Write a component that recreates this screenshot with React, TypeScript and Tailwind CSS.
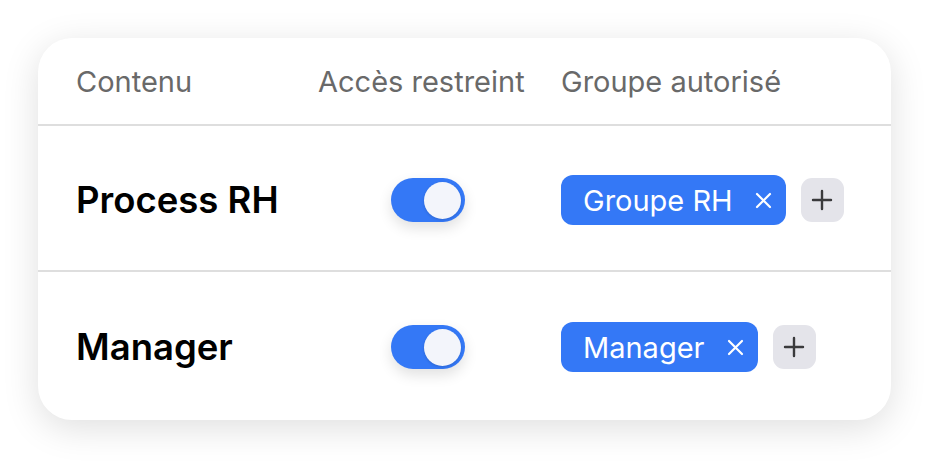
import React from 'react'

type Row = {
  name: string;
  group: string;
}

const rows: Row[] = [
  { name: 'Process RH', group: 'Groupe RH' },
  { name: 'Manager', group: 'Manager' },
]

function Toggle() {
  return (
    <div className="w-[74px] h-[44px] rounded-full bg-[#3478f6] p-[4px] flex justify-end items-center shadow-[0_6px_14px_rgba(0,0,0,0.12)]">
      <div className="w-[37px] h-[37px] rounded-full bg-[#f3f5fb] shadow-[0_1px_3px_rgba(0,0,0,0.15)]" />
    </div>
  )
}

function Chip({ label }: { label: string }) {
  return (
    <div className="flex items-center gap-[15px]">
      <div className="h-[50px] flex items-center rounded-[12px] bg-[#3478f6] pl-[22px] pr-[14px] text-white text-[29px] leading-none">
        <span>{label}</span>
        <svg className="ml-[22px]" width="17" height="17" viewBox="0 0 17 17" fill="none">
          <path d="M2 2L15 15M15 2L2 15" stroke="white" strokeWidth="2.2" strokeLinecap="round" />
        </svg>
      </div>
      <div className="w-[43px] h-[44px] rounded-[11px] bg-[#e4e4ea] flex items-center justify-center">
        <svg width="22" height="22" viewBox="0 0 22 22" fill="none">
          <path d="M11 2V20M2 11H20" stroke="#3a3a3c" strokeWidth="2.4" strokeLinecap="round" />
        </svg>
      </div>
    </div>
  )
}

export default function App() {
  return (
    <div className="w-[934px] h-[463px] bg-white pt-[38px] pl-[38px] font-['Inter',sans-serif]">
      <div className="w-[853px] h-[382px] bg-white rounded-[34px] shadow-[0_8px_36px_rgba(0,0,0,0.13)] overflow-hidden">
        <div className="h-[88px] grid grid-cols-[242px_243px_1fr] items-center pl-[38px] pt-[2px] border-b-2 border-[#dedede] text-[29px] text-[#696969]">
          <span>Contenu</span>
          <span>Accès restreint</span>
          <span>Groupe autorisé</span>
        </div>
        {rows.map((row, i) => (
          <div
            key={row.name}
            className={`h-[146px] grid grid-cols-[242px_243px_1fr] items-center pl-[38px] pt-[4px] ${i === 0 ? 'border-b-2 border-[#dedede]' : ''}`}
          >
            <span className="text-[36.5px] font-semibold text-black">{row.name}</span>
            <div className="pl-[73px]">
              <Toggle />
            </div>
            <Chip label={row.group} />
          </div>
        ))}
      </div>
    </div>
  )
}
